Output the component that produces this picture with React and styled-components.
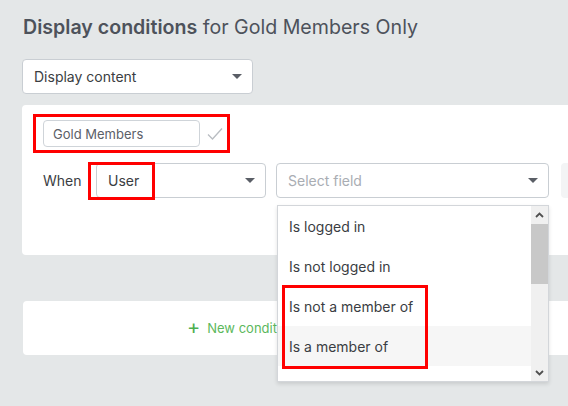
import React from "react";
import styled, { createGlobalStyle } from "styled-components";

const Global = createGlobalStyle`
  html, body { margin: 0; padding: 0; background: #e4e7e8; }
  body { font-family: "Inter", "Noto Sans", sans-serif; overflow: hidden; }
  * { box-sizing: border-box; }
`;

const Page = styled.div`
  position: relative;
  width: 568px;
  height: 406px;
  overflow: hidden;
  padding: 14px 0 0 23px;
`;

const Title = styled.h1`
  margin: 0;
  font-size: 19.6px;
  line-height: 26px;
  font-weight: 400;
  color: #4d525b;
  b { font-weight: 600; }
`;

const SelectBox = styled.div`
  display: flex;
  align-items: center;
  justify-content: space-between;
  width: ${(p) => p.$w}px;
  height: 35px;
  padding: 0 10px 0 11px;
  background: #fff;
  border: 1px solid #c9ced3;
  border-radius: 4px;
  font-size: 14px;
  color: ${(p) => (p.$placeholder ? "#a9adb3" : "#3a3d42")};
  flex-shrink: 0;
`;

const Caret = styled.span`
  width: 0;
  height: 0;
  border-left: 5px solid transparent;
  border-right: 5px solid transparent;
  border-top: 5px solid #5a5e66;
`;

const TopSelect = styled(SelectBox)`
  margin-top: 19px;
  margin-left: -1px;
`;

const Card = styled.div`
  width: 620px;
  background: #fff;
  border-radius: 4px;
`;

const ConditionCard = styled(Card)`
  margin-top: 11px;
  margin-left: -1px;
  padding: 9px 0 57px 11px;
  height: 150px;
`;

const NameWrap = styled.div`
  display: inline-flex;
  align-items: center;
  gap: 7px;
  border: 3px solid #f00;
  padding: 3px 4px 3px 7px;
`;

const NameInput = styled.div`
  width: 157px;
  height: 27px;
  border: 1px solid #cfd4d9;
  border-radius: 4px;
  display: flex;
  align-items: center;
  padding-left: 9px;
  font-size: 13px;
  color: #5b6068;
`;

const Row = styled.div`
  display: flex;
  align-items: center;
  margin-top: 10px;
  padding-left: 10px;
  gap: 10px;
`;

const Label = styled.span`
  font-size: 14px;
  color: #3a3d42;
  width: 43px;
`;

const GhostBox = styled.div`
  width: 60px;
  height: 35px;
  background: #f3f4f5;
  border-radius: 4px;
  flex-shrink: 0;
  margin-left: 2px;
`;

const AddCard = styled(Card)`
  margin-top: 46px;
  height: 54px;
  display: flex;
  align-items: center;
  padding-left: 164px;
  gap: 7px;
  color: #5cb85c;
  font-size: 13px;
`;

const Plus = styled.span`
  font-size: 20px;
  line-height: 1;
  color: #4caf50;
  margin-top: -2px;
`;

const Menu = styled.div`
  position: absolute;
  left: 277px;
  top: 205px;
  width: 272px;
  height: 177px;
  background: #fff;
  border: 1px solid #d3d6da;
  box-shadow: 0 2px 4px rgba(0, 0, 0, 0.12);
  display: flex;
`;

const Items = styled.div`
  flex: 1;
`;

const Item = styled.div`
  height: 40px;
  display: flex;
  align-items: center;
  padding-left: 11px;
  font-size: 14px;
  color: #3a3d42;
  background: ${(p) => (p.$hover ? "#f6f6f6" : "#fff")};
`;

const Scrollbar = styled.div`
  width: 17px;
  background: #f0f0f0;
  display: flex;
  flex-direction: column;
  justify-content: space-between;
`;

const Thumb = styled.div`
  width: 17px;
  height: 60px;
  background: #c8c8c8;
  margin-top: 1px;
`;

const Arrow = styled.div`
  height: 17px;
  width: 17px;
  display: flex;
  align-items: center;
  justify-content: center;
`;

const Mark = styled.div`
  position: absolute;
  border: 3px solid #f00;
  pointer-events: none;
`;

const Chev = ({ up }) => (
  <svg width="9" height="6" viewBox="0 0 9 6">
    <path
      d={up ? "M1 5 L4.5 1.5 L8 5" : "M1 1 L4.5 4.5 L8 1"}
      fill="none"
      stroke="#505050"
      strokeWidth="1.8"
    />
  </svg>
);

export default function App() {
  return (
    <>
      <Global />
      <Page>
        <Title>
          <b>Display conditions</b> for Gold Members Only
        </Title>
        <TopSelect $w={231}>
          Display content
          <Caret />
        </TopSelect>
        <ConditionCard>
          <NameWrap>
            <NameInput>Gold Members</NameInput>
            <svg width="16" height="14" viewBox="0 0 16 14">
              <path d="M1 7.5 L5.5 12 L15 1.5" fill="none" stroke="#b9bdc2" strokeWidth="1.3" />
            </svg>
          </NameWrap>
          <Row>
            <Label>When</Label>
            <SelectBox $w={170}>
              User
              <Caret />
            </SelectBox>
            <SelectBox $w={273} $placeholder>
              Select field
              <Caret />
            </SelectBox>
            <GhostBox />
          </Row>
        </ConditionCard>
        <AddCard>
          <Plus>+</Plus>
          New condition
        </AddCard>

        <Mark style={{ left: 88, top: 162, width: 67, height: 38 }} />

        <Menu>
          <Items>
            <Item>Is logged in</Item>
            <Item>Is not logged in</Item>
            <Item>Is not a member of</Item>
            <Item $hover>Is a member of</Item>
          </Items>
          <Scrollbar>
            <div>
              <Arrow>
                <Chev up />
              </Arrow>
              <Thumb />
            </div>
            <Arrow>
              <Chev />
            </Arrow>
          </Scrollbar>
        </Menu>
        <Mark style={{ left: 282, top: 285, width: 146, height: 84 }} />
      </Page>
    </>
  );
}
